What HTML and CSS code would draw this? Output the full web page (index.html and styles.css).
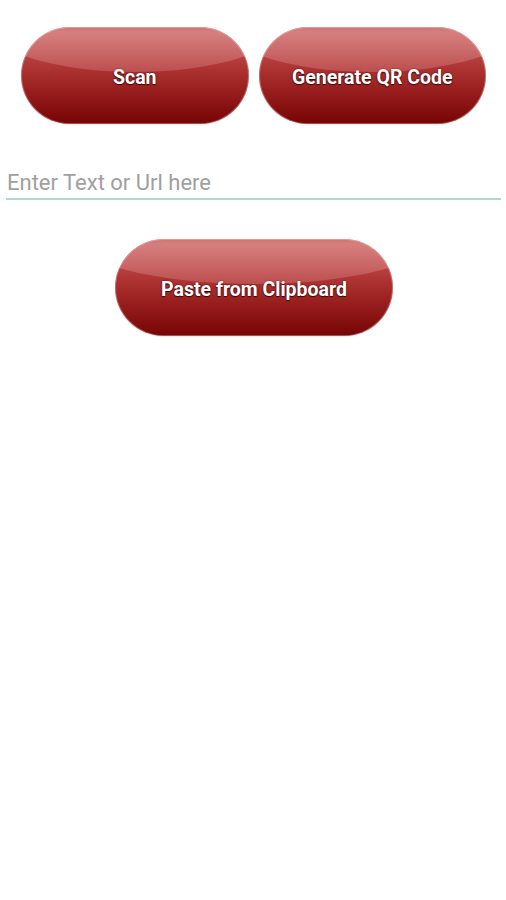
FILE: index.html
```html
<!DOCTYPE html>
<html>
<head>
<meta charset="utf-8">
<link rel="stylesheet" href="styles.css">
</head>
<body>
<div class="screen">
  <div class="top-row">
    <button class="gloss-btn">Scan</button>
    <button class="gloss-btn">Generate QR Code</button>
  </div>
  <div class="field">
    <input class="text-input" type="text" placeholder="Enter Text or Url here">
  </div>
  <div class="center-row">
    <button class="gloss-btn paste">Paste from Clipboard</button>
  </div>
</div>
</body>
</html>
```
FILE: styles.css
```css
html, body {
  margin: 0;
  padding: 0;
  background: #ffffff;
}
.screen {
  width: 506px;
  height: 900px;
  font-family: Roboto, "Noto Sans", sans-serif;
  display: flex;
  flex-direction: column;
}
.top-row {
  display: flex;
  gap: 10px;
  padding: 27px 20px 0 21px;
}
.gloss-btn {
  position: relative;
  overflow: hidden;
  flex: 1;
  height: 97px;
  border: none;
  border-radius: 49px;
  background: linear-gradient(to bottom, #c04848 0%, #b03636 40%, #991f1f 65%, #760404 100%);
  box-shadow: inset 0 0 0 1px rgba(255, 220, 220, 0.35), 0 1px 1px rgba(0,0,0,0.08);
  color: #ffffff;
  font-family: Roboto, "Noto Sans", sans-serif;
  font-weight: 700;
  font-size: 19.5px;
  text-shadow: 0 0 2px rgba(60, 0, 0, 0.9), 0 1px 1px rgba(40, 0, 0, 0.8);
  padding: 4px 0 0 0;
  cursor: pointer;
}
.gloss-btn::before {
  content: "";
  position: absolute;
  left: -16%;
  width: 132%;
  top: -57%;
  height: 103%;
  border-radius: 50%;
  background: linear-gradient(to bottom, rgba(255, 200, 200, 0.0) 50%, rgba(255, 210, 210, 0.3) 60%, rgba(255, 200, 200, 0.2) 100%);
}
.gloss-btn::after {
  content: "";
  position: absolute;
  inset: 0;
  border-radius: 49px;
  background: linear-gradient(to bottom, rgba(255,255,255,0.12) 0%, rgba(255,255,255,0) 40%);
  pointer-events: none;
}
.field {
  padding: 46px 5px 0 6px;
}
.text-input {
  display: block;
  box-sizing: content-box;
  height: 26px;
  line-height: 26px;
  margin: 0;
  padding: 0 0 2px 1px;
  border: none;
  border-bottom: 2px solid #a9dccb;
  outline: none;
  background: transparent;
  font-family: Roboto, "Noto Sans", sans-serif;
  font-size: 22px;
  color: #333333;
  width: calc(100% - 1px);
}
.text-input::placeholder {
  color: #a0a0a0;
}
.center-row {
  display: flex;
  justify-content: center;
  padding: 39px 0 0 2px;
}
.gloss-btn.paste {
  flex: 0 0 278px;
  height: 97px;
}
```
